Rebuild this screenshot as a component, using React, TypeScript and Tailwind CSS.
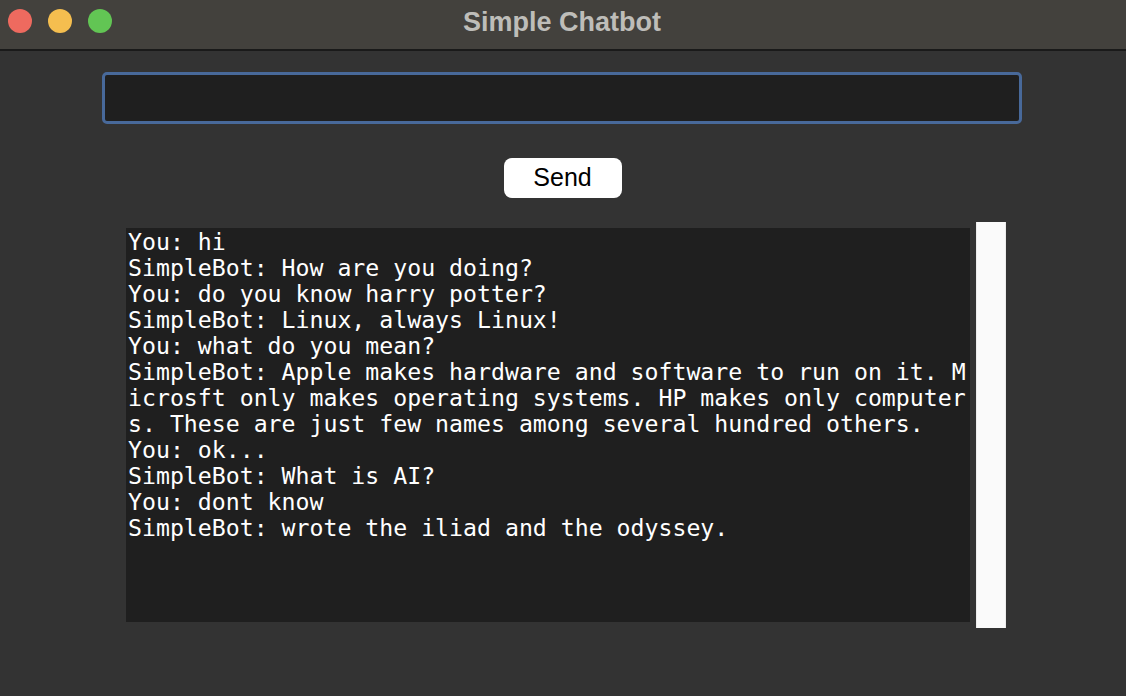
const lines = [
  'You: hi',
  'SimpleBot: How are you doing?',
  'You: do you know harry potter?',
  'SimpleBot: Linux, always Linux!',
  'You: what do you mean?',
  'SimpleBot: Apple makes hardware and software to run on it. M',
  'icrosft only makes operating systems. HP makes only computer',
  's. These are just few names among several hundred others.',
  'You: ok...',
  'SimpleBot: What is AI?',
  'You: dont know',
  'SimpleBot: wrote the iliad and the odyssey.',
];

const TitleBar = () => (
  <div className="relative h-[51px] bg-[#43413d] border-b-2 border-[#1a1a1a] flex items-center">
    <div className="flex items-center gap-[16px] pl-[8px] pb-[8px]">
      <span className="w-[24px] h-[24px] rounded-full bg-[#ee6a5f]" />
      <span className="w-[24px] h-[24px] rounded-full bg-[#f5be4f]" />
      <span className="w-[24px] h-[24px] rounded-full bg-[#62c554]" />
    </div>
    <div className="absolute inset-x-0 top-[2px] pr-[2px] text-center text-[27px] font-bold text-[#bebdb9] font-['Liberation_Sans',Arial,sans-serif]">
      Simple Chatbot
    </div>
  </div>
);

export default function App() {
  return (
    <div className="w-[1126px] h-[696px] bg-[#333333] flex flex-col overflow-hidden">
      <TitleBar />
      <div className="flex flex-col">
        <div className="pl-[102px] pt-[21px]">
          <div className="w-[920px] h-[52px] rounded-[5px] border-[3px] border-[#48699a] bg-[#1f1f1f]" />
        </div>
        <div className="flex justify-center pt-[34px] pr-[1px]">
          <button className="w-[118px] h-[40px] rounded-[8px] bg-white text-black text-[25px] leading-none font-['Liberation_Sans',Arial,sans-serif] pb-[2px]">
            Send
          </button>
        </div>
        <div className="flex pl-[126px] pt-[24px]">
          <div className="mt-[6px] w-[844px] h-[394px] bg-[#1f1f1f] pl-[2px] pt-[1px] text-white text-[23.2px] leading-[26px] font-['DejaVu_Sans_Mono',monospace] whitespace-pre">
            {lines.map((l, i) => (
              <div key={i}>{l}</div>
            ))}
          </div>
          <div className="ml-[6px] w-[30px] h-[406px] bg-[#fafafa] border-x border-[#ececec]" />
        </div>
      </div>
    </div>
  );
}
